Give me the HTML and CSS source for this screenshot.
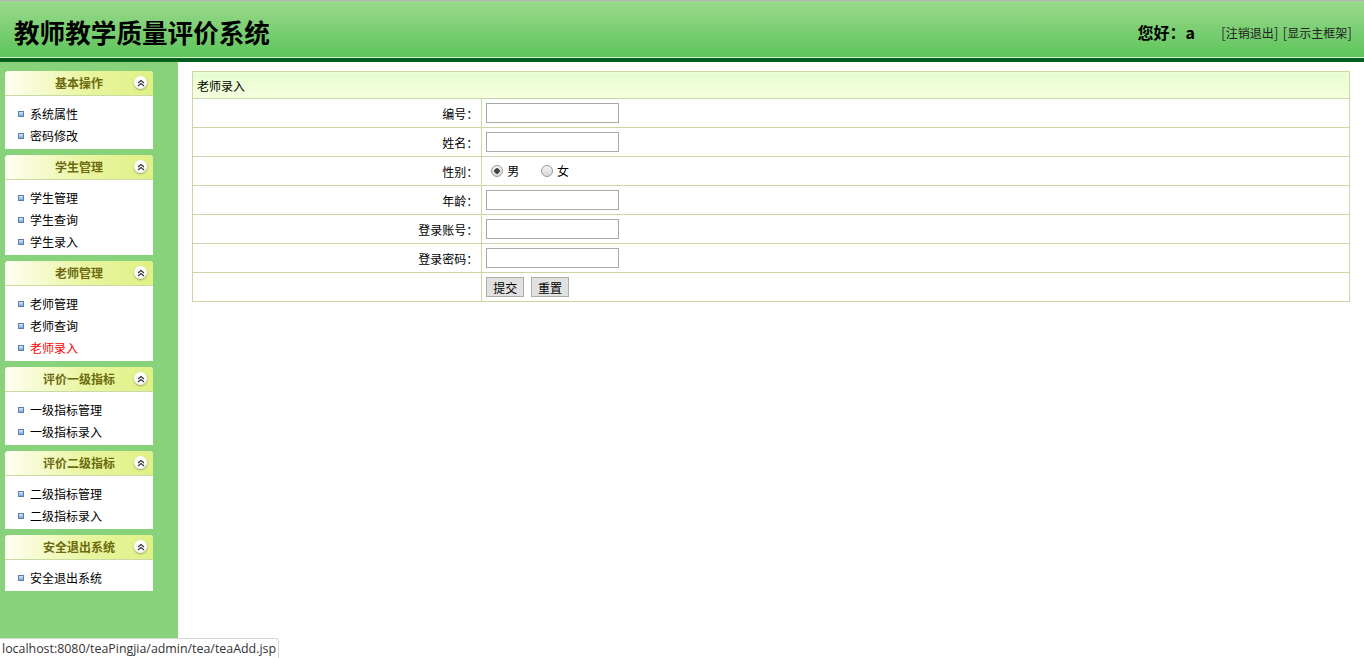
FILE: index.html
```html
<!DOCTYPE html>
<html lang="zh-CN">
<head>
    <meta charset="UTF-8">
    <title>教师教学质量评价系统</title>
    <link rel="stylesheet" href="styles.css">
</head>
<body>
    <div class="top">
        <h1 class="top-title">教师教学质量评价系统</h1>
        <div class="top-user">
            <span class="hello">您好：a</span>
            <a href="#"><b>[</b>注销退出<b>]</b></a>
            <a href="#"><b>[</b>显示主框架<b>]</b></a>
        </div>
    </div>
    <div class="top-line"></div>

    <div class="main">
        <div class="menu">
            <div class="menu-box">
                <div class="menu-head">基本操作<span class="fold"><svg width="8" height="8" viewBox="0 0 8 8"><path d="M1 4 L4 1.5 L7 4 M1 7 L4 4.5 L7 7" fill="none" stroke="#333" stroke-width="1.2"/></svg></span></div>
                <ul class="menu-list">
                    <li><a href="#">系统属性</a></li>
                    <li><a href="#">密码修改</a></li>
                </ul>
            </div>
            <div class="menu-box">
                <div class="menu-head">学生管理<span class="fold"><svg width="8" height="8" viewBox="0 0 8 8"><path d="M1 4 L4 1.5 L7 4 M1 7 L4 4.5 L7 7" fill="none" stroke="#333" stroke-width="1.2"/></svg></span></div>
                <ul class="menu-list">
                    <li><a href="#">学生管理</a></li>
                    <li><a href="#">学生查询</a></li>
                    <li><a href="#">学生录入</a></li>
                </ul>
            </div>
            <div class="menu-box">
                <div class="menu-head">老师管理<span class="fold"><svg width="8" height="8" viewBox="0 0 8 8"><path d="M1 4 L4 1.5 L7 4 M1 7 L4 4.5 L7 7" fill="none" stroke="#333" stroke-width="1.2"/></svg></span></div>
                <ul class="menu-list">
                    <li><a href="#">老师管理</a></li>
                    <li><a href="#">老师查询</a></li>
                    <li><a href="#" class="current">老师录入</a></li>
                </ul>
            </div>
            <div class="menu-box">
                <div class="menu-head">评价一级指标<span class="fold"><svg width="8" height="8" viewBox="0 0 8 8"><path d="M1 4 L4 1.5 L7 4 M1 7 L4 4.5 L7 7" fill="none" stroke="#333" stroke-width="1.2"/></svg></span></div>
                <ul class="menu-list">
                    <li><a href="#">一级指标管理</a></li>
                    <li><a href="#">一级指标录入</a></li>
                </ul>
            </div>
            <div class="menu-box">
                <div class="menu-head">评价二级指标<span class="fold"><svg width="8" height="8" viewBox="0 0 8 8"><path d="M1 4 L4 1.5 L7 4 M1 7 L4 4.5 L7 7" fill="none" stroke="#333" stroke-width="1.2"/></svg></span></div>
                <ul class="menu-list">
                    <li><a href="#">二级指标管理</a></li>
                    <li><a href="#">二级指标录入</a></li>
                </ul>
            </div>
            <div class="menu-box">
                <div class="menu-head">安全退出系统<span class="fold"><svg width="8" height="8" viewBox="0 0 8 8"><path d="M1 4 L4 1.5 L7 4 M1 7 L4 4.5 L7 7" fill="none" stroke="#333" stroke-width="1.2"/></svg></span></div>
                <ul class="menu-list">
                    <li><a href="#">安全退出系统</a></li>
                </ul>
            </div>
        </div>

        <div class="content">
            <form>
                <table class="form-table">
                    <tr>
                        <td colspan="2" class="form-head">老师录入</td>
                    </tr>
                    <tr>
                        <td class="label">编号：</td>
                        <td><input type="text" class="txt"></td>
                    </tr>
                    <tr>
                        <td class="label">姓名：</td>
                        <td><input type="text" class="txt"></td>
                    </tr>
                    <tr>
                        <td class="label">性别：</td>
                        <td>
                            <label class="radio"><input type="radio" name="sex" checked>男</label>
                            <label class="radio"><input type="radio" name="sex">女</label>
                        </td>
                    </tr>
                    <tr>
                        <td class="label">年龄：</td>
                        <td><input type="text" class="txt"></td>
                    </tr>
                    <tr>
                        <td class="label">登录账号：</td>
                        <td><input type="text" class="txt"></td>
                    </tr>
                    <tr>
                        <td class="label">登录密码：</td>
                        <td><input type="password" class="txt"></td>
                    </tr>
                    <tr>
                        <td></td>
                        <td>
                            <button type="button" class="btn">提交</button>
                            <button type="reset" class="btn">重置</button>
                        </td>
                    </tr>
                </table>
            </form>
        </div>
    </div>

    <div class="status">localhost:8080/teaPingjia/admin/tea/teaAdd.jsp</div>
</body>
</html>
```

FILE: styles.css
```css
html, body {
    height: 100%;
}
body {
    margin: 0;
    font-family: "Noto Sans CJK SC", "Liberation Sans", sans-serif;
    font-size: 12px;
    color: #000;
    display: flex;
    flex-direction: column;
}
a {
    color: #000;
    text-decoration: none;
}

/* top bar */
.top {
    height: 56px;
    border-top: 1px solid #b4b4b4;
    border-bottom: 1px solid #d8eed0;
    background: linear-gradient(#9cd98d, #5dc55a);
    display: flex;
    align-items: center;
    justify-content: space-between;
    padding: 0 12px 0 14px;
}
.top-title {
    margin: 4px 0 0 0;
    font-size: 25.6px;
    font-weight: bold;
}
.top-user {
    margin-top: 6px;
    display: flex;
    align-items: center;
}
.hello {
    font-size: 16px;
    font-weight: bold;
    margin-right: 22px;
}
.top-user a {
    font-size: 12px;
    color: #222;
    margin-left: 4px;
}
.top-user a b {
    font-weight: normal;
    font-size: 14px;
    color: #333;
}
.top-line {
    height: 4px;
    background: #02601f;
}

.main {
    flex: 1;
    display: flex;
    min-height: 0;
}

/* left menu */
.menu {
    width: 173px;
    background: #88d27b;
    padding: 9px 0 0 5px;
}
.menu-box {
    width: 148px;
    margin-bottom: 6px;
    background: #fff;
    border-radius: 4px 4px 0 0;
}
.menu-head {
    position: relative;
    height: 24px;
    line-height: 24px;
    text-align: center;
    font-weight: bold;
    color: #6b6a10;
    background: linear-gradient(to right, #fffff2, #e9f59f 55%, #e0f187);
    border-radius: 4px 4px 0 0;
    border-bottom: 1px solid #c9dba4;
}
.fold {
    position: absolute;
    right: 6px;
    top: 5px;
    width: 13px;
    height: 13px;
    border-radius: 50%;
    background: radial-gradient(circle at 40% 35%, #fff 55%, #dcdcdc);
    box-shadow: 0 1px 2px rgba(0, 0, 0, 0.35);
    display: flex;
    align-items: center;
    justify-content: center;
}
.menu-list {
    list-style: none;
    margin: 0;
    padding: 7px 0 2px 13px;
}
.menu-list li {
    height: 22px;
    line-height: 22px;
    display: flex;
    align-items: center;
}
.menu-list li::before {
    content: "";
    width: 4px;
    height: 4px;
    border: 1px solid #5b7fa8;
    background: linear-gradient(#d6e8fb, #7aa7dd);
    margin-right: 6px;
}
.menu-list a.current {
    color: #f00;
}

/* content */
.content {
    flex: 1;
    padding: 9px 14px 0 14px;
}
.form-table {
    width: 100%;
    border-collapse: collapse;
    border: 1px solid #c8d9a6;
}
.form-table td {
    border: 1px solid #c8d9a6;
    height: 28px;
    padding: 0 0 0 4px;
}
.form-table td.form-head {
    height: 26px;
    background: linear-gradient(#e6fdd0, #f7ffe0);
    padding-left: 4px;
}
.form-table td.label {
    width: 25%;
    text-align: right;
    padding: 0 3px 0 0;
}
.txt {
    width: 133px;
    height: 20px;
    box-sizing: border-box;
    border: 1px solid #a9a9a9;
    margin: 0;
    padding: 0 2px;
    vertical-align: middle;
}
.radio {
    display: inline-flex;
    align-items: center;
    margin-right: 14px;
}
.radio input {
    appearance: none;
    width: 12px;
    height: 12px;
    margin: 0 4px 0 5px;
    border: 1px solid #9a9a9a;
    border-radius: 50%;
    background: linear-gradient(#f4f4f4, #d8d8d8);
    box-sizing: border-box;
}
.radio input:checked {
    background: radial-gradient(circle, #444 0 2.5px, transparent 3px), linear-gradient(#f4f4f4, #d8d8d8);
}
.btn {
    height: 20px;
    padding: 0 6px;
    font-family: inherit;
    font-size: 12px;
    background: #e1e1e1;
    border: 1px solid #adadad;
    margin-right: 4px;
    vertical-align: middle;
}

.status {
    position: fixed;
    left: 0;
    bottom: 0;
    height: 19px;
    line-height: 19px;
    padding: 0 2px;
    font-family: "Open Sans", "Liberation Sans", sans-serif;
    font-size: 12.4px;
    color: #333;
    background: #fff;
    border: 1px solid #d8d8d8;
    border-left: none;
    border-bottom: none;
    border-radius: 0 3px 0 0;
}
```
